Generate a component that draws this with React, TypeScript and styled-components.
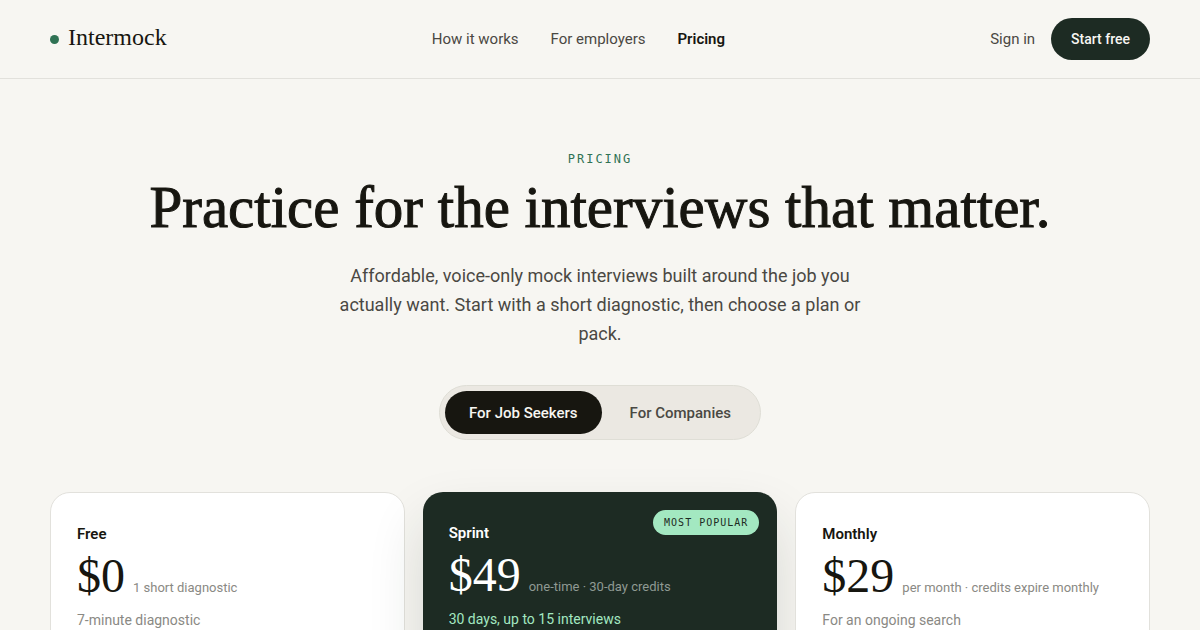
import React, { useState } from "react";
import styled, { createGlobalStyle, css } from "styled-components";

const color = {
  page: "#f7f6f2",
  ink: "#171610",
  text: "#4a4843",
  muted: "#8a8984",
  line: "#e2e1dc",
  forest: "#1d2b23",
  green: "#2f7254",
  mint: "#a3e8c1",
};

const sans = `Roboto, "Liberation Sans", sans-serif`;
const serif = `"Liberation Serif", serif`;
const mono = `"DejaVu Sans Mono", "Liberation Mono", monospace`;

const GlobalStyle = createGlobalStyle`
  *, *::before, *::after { box-sizing: border-box; }
  body {
    margin: 0;
    background: ${color.page};
    color: ${color.ink};
    font-family: ${sans};
    -webkit-font-smoothing: antialiased;
  }
  h1, h2, p { margin: 0; font-weight: 400; }
  a { color: inherit; text-decoration: none; }
  button { font: inherit; border: 0; cursor: pointer; }
`;

const Container = styled.div`
  width: 100%;
  max-width: 1148px;
  margin: 0 auto;
  padding: 0 24px;
`;

const Header = styled.header`
  border-bottom: 1px solid ${color.line};
`;

const HeaderRow = styled(Container)`
  display: flex;
  align-items: center;
  justify-content: space-between;
  padding-top: 18px;
  padding-bottom: 18px;
`;

const Brand = styled.a`
  display: flex;
  align-items: center;
  gap: 9px;
`;

const BrandDot = styled.span`
  width: 9px;
  height: 9px;
  border-radius: 50%;
  background: ${color.green};
`;

const BrandName = styled.span`
  padding-bottom: 4px;
  font-family: ${serif};
  font-size: 24px;
  line-height: 28px;
`;

const Nav = styled.nav`
  display: flex;
  gap: 32px;
`;

const NavLink = styled.a<{ $active?: boolean }>`
  font-size: 15px;
  line-height: 20px;
  font-weight: ${(p) => (p.$active ? 600 : 400)};
  color: ${(p) => (p.$active ? color.ink : color.text)};
`;

const Actions = styled.div`
  display: flex;
  align-items: center;
  gap: 16px;
`;

const PrimaryButton = styled.button`
  padding: 11px 20px;
  border-radius: 21px;
  background: ${color.forest};
  color: ${color.page};
  font-size: 14px;
  line-height: 20px;
  font-weight: 500;
`;

const Hero = styled.section`
  display: flex;
  flex-direction: column;
  align-items: center;
  padding-top: 72px;
  text-align: center;
`;

const Eyebrow = styled.p`
  font-family: ${mono};
  font-size: 12px;
  line-height: 16px;
  letter-spacing: 2px;
  text-transform: uppercase;
  color: ${color.green};
`;

const Title = styled.h1`
  margin-top: 8px;
  font-family: ${serif};
  font-size: 59px;
  line-height: 64px;
  -webkit-text-stroke: 1px ${color.ink};
`;

const Lead = styled.p`
  max-width: 540px;
  margin-top: 22px;
  font-size: 18px;
  line-height: 29px;
  color: ${color.text};
`;

const Toggle = styled.div`
  display: flex;
  gap: 4px;
  margin-top: 37px;
  padding: 5px;
  border: 1px solid #dfded6;
  border-radius: 28px;
  background: #ebe8e2;
`;

const ToggleButton = styled.button<{ $active: boolean }>`
  padding: 13px 24px 11px;
  border-radius: 22px;
  background: ${(p) => (p.$active ? color.ink : "transparent")};
  color: ${(p) => (p.$active ? color.page : color.text)};
  font-size: 15px;
  line-height: 19px;
  font-weight: 500;
`;

const Plans = styled.section`
  display: grid;
  grid-template-columns: repeat(3, 1fr);
  gap: 18px;
  padding: 52px 0 72px;
`;

const PlanCard = styled.article<{ $featured?: boolean }>`
  position: relative;
  min-height: 480px;
  padding: 30px 26px;
  border-radius: 20px;
  ${(p) =>
    p.$featured
      ? css`
          background: ${color.forest};
          color: #ffffff;
          box-shadow: 0 28px 56px rgba(29, 43, 35, 0.14);
        `
      : css`
          background: #ffffff;
          border: 1px solid ${color.line};
        `}
`;

const PlanName = styled.h2`
  font-size: 15px;
  line-height: 22px;
  font-weight: 600;
`;

const PriceRow = styled.div`
  display: flex;
  align-items: baseline;
  gap: 8px;
  margin-top: 7px;
`;

const Price = styled.span`
  font-family: ${serif};
  font-size: 48px;
  line-height: 48px;
`;

const PriceTerms = styled.span<{ $featured?: boolean }>`
  font-size: 13px;
  line-height: 20px;
  color: ${(p) => (p.$featured ? "#8f9a93" : color.muted)};
`;

const PlanNote = styled.p<{ $featured?: boolean }>`
  margin-top: 10px;
  font-size: 14px;
  line-height: 20px;
  color: ${(p) => (p.$featured ? color.mint : color.muted)};
`;

const Badge = styled.span`
  position: absolute;
  top: 18px;
  right: 18px;
  padding: 5px 11px;
  border-radius: 13px;
  background: ${color.mint};
  color: ${color.forest};
  font-family: ${mono};
  font-size: 10px;
  line-height: 15px;
  letter-spacing: 1px;
  text-transform: uppercase;
`;

interface Plan {
  name: string;
  price: string;
  terms: string;
  note: string;
  badge?: string;
}

const plans: Plan[] = [
  { name: "Free", price: "$0", terms: "1 short diagnostic", note: "7-minute diagnostic" },
  {
    name: "Sprint",
    price: "$49",
    terms: "one-time · 30-day credits",
    note: "30 days, up to 15 interviews",
    badge: "Most popular",
  },
  {
    name: "Monthly",
    price: "$29",
    terms: "per month · credits expire monthly",
    note: "For an ongoing search",
  },
];

const audiences = ["For Job Seekers", "For Companies"];

export default function App() {
  const [audience, setAudience] = useState(audiences[0]);

  return (
    <>
      <GlobalStyle />
      <Header>
        <HeaderRow>
          <Brand href="#">
            <BrandDot />
            <BrandName>Intermock</BrandName>
          </Brand>
          <Nav>
            <NavLink href="#how">How it works</NavLink>
            <NavLink href="#employers">For employers</NavLink>
            <NavLink href="#pricing" $active aria-current="page">
              Pricing
            </NavLink>
          </Nav>
          <Actions>
            <NavLink href="#sign-in">Sign in</NavLink>
            <PrimaryButton type="button">Start free</PrimaryButton>
          </Actions>
        </HeaderRow>
      </Header>
      <Container as="main">
        <Hero>
          <Eyebrow>Pricing</Eyebrow>
          <Title>Practice for the interviews that matter.</Title>
          <Lead>
            Affordable, voice-only mock interviews built around the job you actually want. Start
            with a short diagnostic, then choose a plan or pack.
          </Lead>
          <Toggle role="group" aria-label="Audience">
            {audiences.map((name) => (
              <ToggleButton
                key={name}
                type="button"
                $active={name === audience}
                aria-pressed={name === audience}
                onClick={() => setAudience(name)}
              >
                {name}
              </ToggleButton>
            ))}
          </Toggle>
        </Hero>
        <Plans>
          {plans.map((plan) => {
            const featured = Boolean(plan.badge);
            return (
              <PlanCard key={plan.name} $featured={featured}>
                {plan.badge && <Badge>{plan.badge}</Badge>}
                <PlanName>{plan.name}</PlanName>
                <PriceRow>
                  <Price>{plan.price}</Price>
                  <PriceTerms $featured={featured}>{plan.terms}</PriceTerms>
                </PriceRow>
                <PlanNote $featured={featured}>{plan.note}</PlanNote>
              </PlanCard>
            );
          })}
        </Plans>
      </Container>
    </>
  );
}
